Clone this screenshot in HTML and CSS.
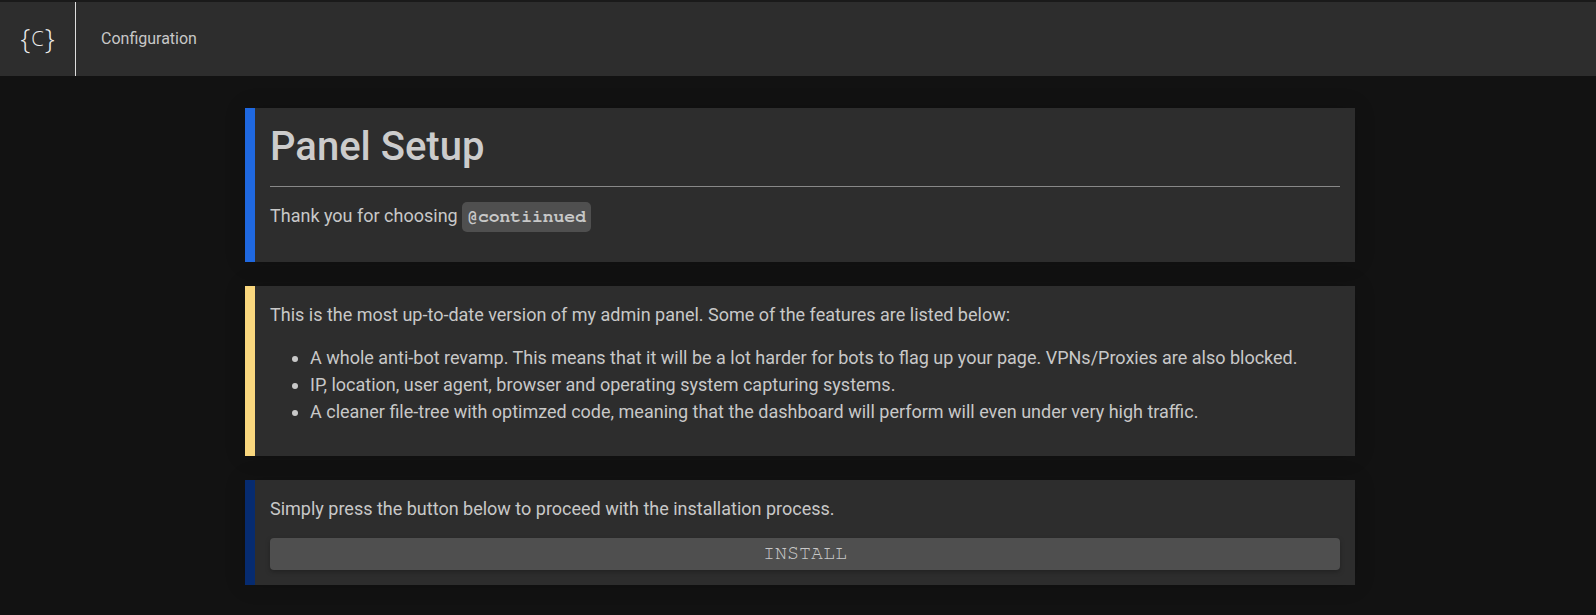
FILE: index.html
```html
<!DOCTYPE html>
<html lang="en">
<head>
    <meta charset="UTF-8"/>
    <meta content="width=device-width, initial-scale=1" name="viewport"/>
    <title>Panel Setup</title>
    <link rel="stylesheet" href="styles.css">
</head>
<body>

<nav class="topbar">
    <div class="brand"><span>{</span><span class="brand-letter">C</span><span>}</span></div>
    <span class="topbar-title">Configuration</span>
</nav>

<main class="container">
    <section class="panel panel-blue">
        <h1>Panel Setup</h1>
        <hr/>
        <p class="intro">Thank you for choosing <code>@contiinued</code></p>
    </section>

    <section class="panel panel-yellow">
        <p>This is the most up-to-date version of my admin panel. Some of the features are listed below:</p>
        <ul>
            <li>A whole anti-bot revamp. This means that it will be a lot harder for bots to flag up your page. VPNs/Proxies are also blocked.</li>
            <li>IP, location, user agent, browser and operating system capturing systems.</li>
            <li>A cleaner file-tree with optimzed code, meaning that the dashboard will perform will even under very high traffic.</li>
        </ul>
    </section>

    <section class="panel panel-navy">
        <p>Simply press the button below to proceed with the installation process.</p>
        <button type="button">INSTALL</button>
    </section>
</main>

</body>
</html>
```

FILE: styles.css
```css
* {
  box-sizing: border-box;
}
body {
  font-family: Roboto, sans-serif;
  font-size: 18px;
  line-height: 27px;
  background: #121212;
  color: #c8c8c8;
  margin: 0;
}
.topbar {
  display: flex;
  align-items: center;
  height: 76px;
  background: #2d2d2d;
  border-top: 2px solid #1a1a1a;
}
.brand {
  display: flex;
  align-items: center;
  justify-content: center;
  width: 76px;
  height: 100%;
  padding-bottom: 2px;
  border-right: 1px solid #dddddd;
  font-family: "Open Sans", sans-serif;
  font-size: 28px;
  font-weight: 300;
  color: #eeeeee;
}
.brand-letter {
  font-size: 20px;
  margin: 0 1px;
}
.topbar-title {
  margin: 0 0 2px 25px;
  font-size: 16px;
}
.container {
  width: 1110px;
  margin: 32px 0 0 245px;
}
.panel {
  background: #2d2d2d;
  border-left: 10px solid #1f68e0;
  padding: 15px;
  margin-bottom: 24px;
  box-shadow: 0 0 20px rgba(0,0,0,0.15);
}
.panel-yellow {
  border-left-color: #f9d77e;
}
.panel-navy {
  border-left-color: #062b70;
}
h1 {
  font-size: 40px;
  font-weight: 500;
  line-height: 48px;
  margin: 0;
  color: #cccccc;
}
hr {
  border: 0;
  border-top: 1px solid #888888;
  margin: 15px 0;
}
p {
  margin: 0 0 16px;
}
.intro {
  margin-bottom: 15px;
}
code {
  display: inline-block;
  font-family: "Nimbus Mono PS", "FreeMono", Courier, "Liberation Mono", monospace;
  font-size: 18px;
  font-weight: bold;
  line-height: 20px;
  padding: 5px;
  background: #4f4f4f;
  border-radius: 5px;
  vertical-align: middle;
}
ul {
  margin: 0 0 16px;
  padding-left: 40px;
}
button {
  display: block;
  width: 100%;
  height: 32px;
  padding: 0 0 2px;
  background: #4f4f4f;
  border: none;
  border-radius: 4px;
  color: #c8c8c8;
  font-family: "Nimbus Mono PS", "FreeMono", Courier, "Liberation Mono", monospace;
  font-size: 20px;
  box-shadow: 0 2px 5px rgba(0,0,0,0.26);
  cursor: pointer;
}
```
